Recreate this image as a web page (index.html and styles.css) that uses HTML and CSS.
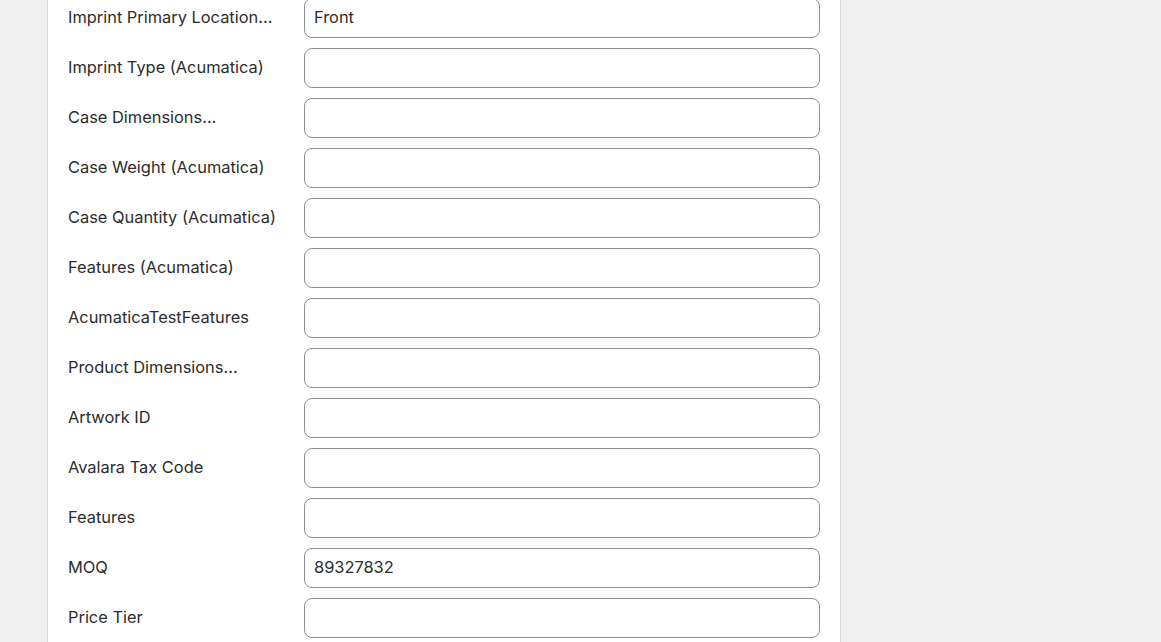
FILE: index.html
```html
<!DOCTYPE html>
<html>
<head>
<meta charset="utf-8">
<link rel="stylesheet" href="styles.css">
</head>
<body>
<div class="card">
  <div class="form">
    <div class="row"><label class="lbl">Imprint Primary Location...</label><input class="field" type="text" value="Front"></div>
    <div class="row"><label class="lbl">Imprint Type (Acumatica)</label><input class="field" type="text" value=""></div>
    <div class="row"><label class="lbl">Case Dimensions...</label><input class="field" type="text" value=""></div>
    <div class="row"><label class="lbl">Case Weight (Acumatica)</label><input class="field" type="text" value=""></div>
    <div class="row"><label class="lbl">Case Quantity (Acumatica)</label><input class="field" type="text" value=""></div>
    <div class="row"><label class="lbl">Features (Acumatica)</label><input class="field" type="text" value=""></div>
    <div class="row"><label class="lbl">AcumaticaTestFeatures</label><input class="field" type="text" value=""></div>
    <div class="row"><label class="lbl">Product Dimensions...</label><input class="field" type="text" value=""></div>
    <div class="row"><label class="lbl">Artwork ID</label><input class="field" type="text" value=""></div>
    <div class="row"><label class="lbl">Avalara Tax Code</label><input class="field" type="text" value=""></div>
    <div class="row"><label class="lbl">Features</label><input class="field" type="text" value=""></div>
    <div class="row"><label class="lbl">MOQ</label><input class="field" type="text" value="89327832"></div>
    <div class="row"><label class="lbl">Price Tier</label><input class="field" type="text" value=""></div>
  </div>
</div>
</body>
</html>
```
FILE: styles.css
```css
html, body {
  margin: 0;
  padding: 0;
  background: #f0f0f1;
  height: 642px;
  overflow: hidden;
}
body {
  font-family: Inter, "Liberation Sans", sans-serif;
  color: #2c2c2c;
}
.card {
  margin-left: 47px;
  width: 792px;
  height: 650px;
  background: #fff;
  border-left: 1px solid #dcdcde;
  border-right: 1px solid #dcdcde;
}
.form {
  display: flex;
  flex-direction: column;
  gap: 10px;
  padding: 0 20px;
  margin-top: -2px;
}
.row {
  display: flex;
  align-items: center;
  height: 40px;
}
.lbl {
  width: 236px;
  flex: none;
  font-size: 16.4px;
  line-height: 20px;
  padding-bottom: 2px;
  color: #2c2c2c;
}
.field {
  box-sizing: border-box;
  width: 516px;
  height: 40px;
  margin: 0;
  border: 1px solid #8c8f94;
  border-radius: 8px;
  padding: 0 9px 3px;
  font-family: Inter, "Liberation Sans", sans-serif;
  font-size: 16.4px;
  color: #2c2c2c;
  background: #fff;
  outline: none;
}
```
